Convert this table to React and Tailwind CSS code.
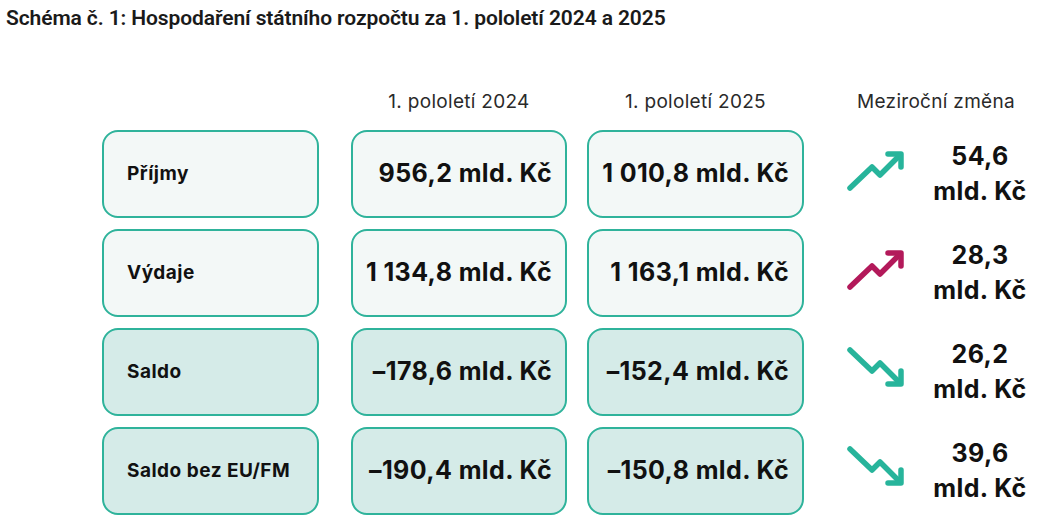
const rows = [
  { label: 'Příjmy', y2024: '956,2 mld. Kč', y2025: '1 010,8 mld. Kč', change: '54,6', trend: 'up', tone: 'teal', fill: 'light' },
  { label: 'Výdaje', y2024: '1 134,8 mld. Kč', y2025: '1 163,1 mld. Kč', change: '28,3', trend: 'up', tone: 'red', fill: 'light' },
  { label: 'Saldo', y2024: '–178,6 mld. Kč', y2025: '–152,4 mld. Kč', change: '26,2', trend: 'down', tone: 'teal', fill: 'dark' },
  { label: 'Saldo bez EU/FM', y2024: '–190,4 mld. Kč', y2025: '–150,8 mld. Kč', change: '39,6', trend: 'down', tone: 'teal', fill: 'dark' },
]

const boxFill = {
  light: 'bg-[#f3f8f7]',
  dark: 'bg-[#d5ebe8]',
}

function TrendIcon({ trend, tone }) {
  const color = tone === 'red' ? '#b3195a' : '#27b49b'
  const up = trend === 'up'
  return (
    <svg width="60" height="44" viewBox="0 0 60 44" fill="none" stroke={color} strokeWidth="5.5" strokeLinecap="round" strokeLinejoin="round">
      {up ? (
        <>
          <polyline points="5,40 27,19 35,27 55,7" />
          <polyline points="43,6 56,6 56,19" />
        </>
      ) : (
        <>
          <polyline points="5,4 27,25 35,17 55,37" />
          <polyline points="43,38 56,38 56,25" />
        </>
      )}
    </svg>
  )
}

function Box({ children, fill, className = '' }) {
  return (
    <div
      className={`flex h-[88px] items-center rounded-[16px] border-2 border-[#2fb39b] ${boxFill[fill]} ${className}`}
    >
      {children}
    </div>
  )
}

export default function App() {
  return (
    <div className="h-[526px] w-[1050px] overflow-hidden bg-white font-['Inter',sans-serif] text-[#111]">
      <h1 className="pl-[6px] pt-[6px] font-['Roboto',sans-serif] text-[21px] font-semibold leading-[24px] tracking-[-0.1px] text-[#1a1a1a]">
        Schéma č. 1: Hospodaření státního rozpočtu za 1. pololetí 2024 a 2025
      </h1>

      <div className="pl-[102px] pt-[60px]">
        <div className="flex h-[24px] items-center text-[19px] leading-[24px] tracking-[0.3px] text-[#2a2a2a]">
          <div className="w-[217px]" />
          <div className="ml-[32px] w-[216px] text-center">1. pololetí 2024</div>
          <div className="ml-[20px] w-[217px] text-center">1. pololetí 2025</div>
          <div className="w-[246px] pl-[18px] text-center">Meziroční změna</div>
        </div>

        <div className="mt-[16px] flex flex-col gap-[11px]">
          {rows.map((row) => (
            <div key={row.label} className="flex items-center">
              <Box fill={row.fill} className="w-[217px] pl-[23px]">
                <span className="text-[19px] font-bold tracking-[0.5px]">{row.label}</span>
              </Box>
              <Box fill={row.fill} className="ml-[32px] w-[216px] justify-end pr-[13px]">
                <span className="text-[25px] font-bold tracking-[0.4px]">{row.y2024}</span>
              </Box>
              <Box fill={row.fill} className="ml-[20px] w-[217px] justify-end pr-[13px]">
                <span className="text-[25px] font-bold tracking-[0.4px]">{row.y2025}</span>
              </Box>
              <div className="flex w-[246px] items-center">
                <div className="ml-[41px] -mt-[8px]">
                  <TrendIcon trend={row.trend} tone={row.tone} />
                </div>
                <div className="ml-[15px] w-[120px] text-center text-[25px] font-bold leading-[35px] tracking-[0.4px]">
                  <div>{row.change}</div>
                  <div>mld. Kč</div>
                </div>
              </div>
            </div>
          ))}
        </div>
      </div>
    </div>
  )
}
